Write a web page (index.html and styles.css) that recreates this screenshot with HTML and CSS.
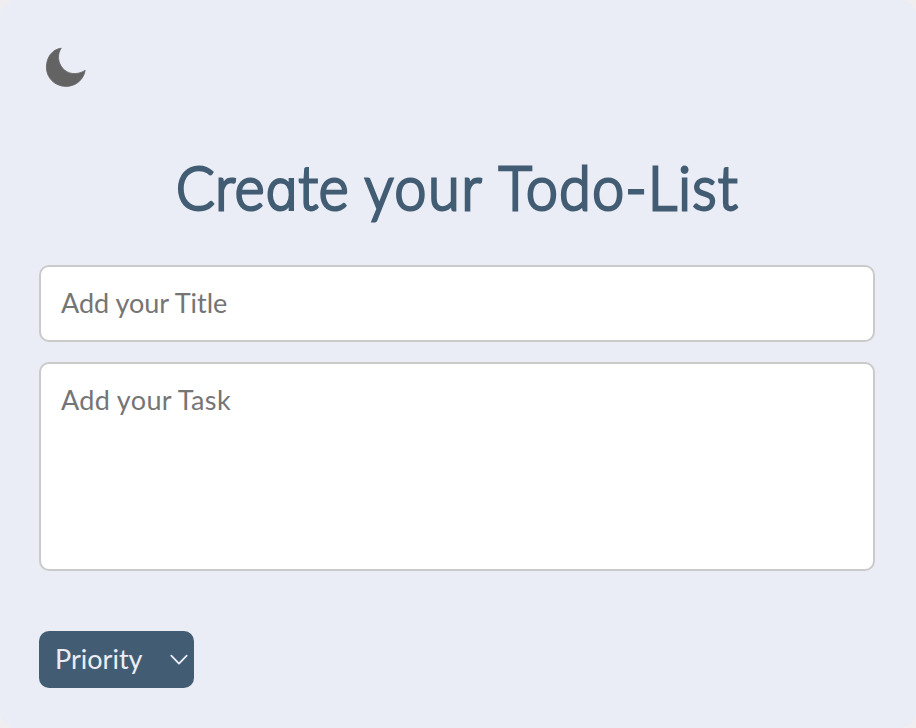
FILE: index.html
```html
<!DOCTYPE html>
<html lang="en">
<head>
<meta charset="UTF-8">
<title>Todo-List</title>
<link rel="stylesheet" href="styles.css">
</head>
<body>
<main class="card">
  <button class="theme-toggle" aria-label="Toggle theme">
    <svg class="moon" viewBox="0 0 40 40"><path d="M15.2 1.2C6.5 14 20 34.5 39.2 23.4C37.5 33 29.5 39.4 20 39.4C9 39.4 .4 31 .4 20.3C.4 10.5 6 2.3 15.2 1.2Z" fill="#636363" stroke="#636363" stroke-width=".8" stroke-linejoin="round"/></svg>
  </button>
  <h1 class="heading"><span class="create">Cre<span class="round-a">a</span>te</span> <span class="your">your</span> <span class="todo">Todo-List</span></h1>
  <form class="form">
    <input class="field title" type="text" placeholder="Add your Title">
    <textarea class="field task" placeholder="Add your Task"></textarea>
    <button class="priority" type="button">
      <span class="label">Priority</span>
      <svg class="chevron" viewBox="0 0 18 12"><path d="M1.3 1.6L9 9.6L16.7 1.6" fill="none" stroke="#eaedf5" stroke-width="1.8" stroke-linecap="round" stroke-linejoin="round"/></svg>
    </button>
  </form>
</main>
</body>
</html>
```
FILE: styles.css
```css
* { box-sizing: border-box; }
body { margin: 0; background: #f0eeef; font-family: Lato, "Open Sans", sans-serif; }
.card { height: 728px; padding: 47px 41px 40px 39px; background: #eaedf5; border-radius: 16px; overflow: hidden; }
.theme-toggle { display: block; width: 40px; height: 40px; margin: 0 0 0 7px; padding: 0; border: 0; background: none; }
.moon { display: block; width: 40px; height: 40px; overflow: visible; }
.heading { display: flex; justify-content: space-between; width: 602px; height: 80px; margin: 60px 0 0 137px; color: #425d73; font-size: 61px; line-height: 80px; font-weight: 300; white-space: nowrap; transform: scaleX(.935); transform-origin: left center; -webkit-text-stroke: 3px #425d73; }
.create { letter-spacing: 1px; }
.your { letter-spacing: 2px; }
.todo { letter-spacing: 1.5px; }
.round-a { font-family: Inter, sans-serif; font-size: 57px; font-weight: 300; font-feature-settings: "cv11"; line-height: 1; -webkit-text-stroke-width: 2px; }
.form { margin-top: 38px; }
.field { display: block; width: 100%; border: 2px solid #cacaca; border-radius: 10px; background: #fff; outline: 0; resize: none; font: 400 27px/36px Lato, "Open Sans", sans-serif; }
.field::placeholder { color: #757575; opacity: 1; }
.title { height: 77px; padding: 17px 20px 19px; }
.task { height: 209px; margin-top: 20px; padding: 18px 20px; letter-spacing: .35px; }
.priority { display: flex; align-items: center; justify-content: space-between; width: 155px; height: 57px; margin-top: 60px; padding: 0 6px 0 16px; border: 0; border-radius: 10px; background: #425d73; color: #eaedf5; font: 400 27px/36px Lato, "Open Sans", sans-serif; }
.label { padding-bottom: 1px; }
.chevron { width: 18px; height: 12px; }
```
